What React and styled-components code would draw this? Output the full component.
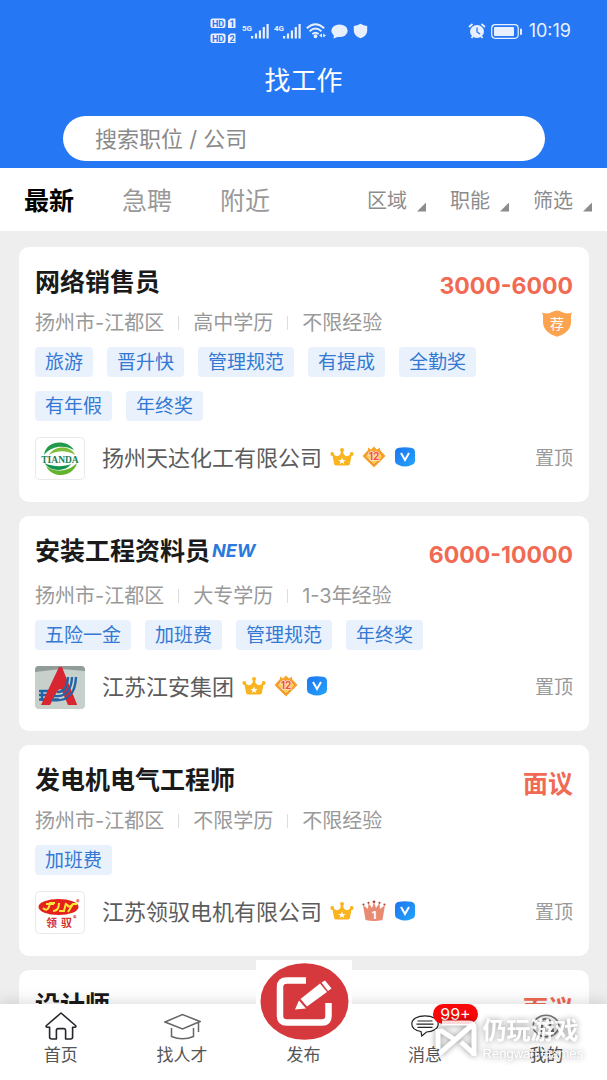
import React, { useState } from 'react';
import styled, { createGlobalStyle } from 'styled-components';

const jobs = [
	{
		id: 1,
		title: '网络销售员',
		pay: '3000-6000',
		meta: ['扬州市-江都区', '高中学历', '不限经验'],
		tags: ['旅游', '晋升快', '管理规范', '有提成', '全勤奖', '有年假', '年终奖'],
		company: '扬州天达化工有限公司',
		logo: 'tianda',
		medal: 'year',
		recommend: true,
	},
	{
		id: 2,
		title: '安装工程资料员',
		isNew: true,
		pay: '6000-10000',
		meta: ['扬州市-江都区', '大专学历', '1-3年经验'],
		tags: ['五险一金', '加班费', '管理规范', '年终奖'],
		company: '江苏江安集团',
		logo: 'jiangan',
		medal: 'year',
	},
	{
		id: 3,
		title: '发电机电气工程师',
		pay: '面议',
		meta: ['扬州市-江都区', '不限学历', '不限经验'],
		tags: ['加班费'],
		company: '江苏领驭电机有限公司',
		logo: 'lingyu',
		medal: 'first',
	},
	{
		id: 4,
		title: '设计师',
		pay: '面议',
		meta: [],
		tags: [],
	},
];

const tabs = ['最新', '急聘', '附近'];
const filters = ['区域', '职能', '筛选'];

export default function App() {
	const [tab, setTab] = useState('最新');
	const [keyword, setKeyword] = useState('');

	return (
		<>
			<GlobalStyle />
			<Page>
				<Header>
					<StatusBar />
					<HeaderTitle>找工作</HeaderTitle>
					<SearchWrap>
						<SearchInput
							type="search"
							aria-label="搜索职位 / 公司"
							placeholder="搜索职位 / 公司"
							value={keyword}
							onChange={(e) => setKeyword(e.target.value)}
						/>
					</SearchWrap>
				</Header>
				<Toolbar>
					<TabGroup>
						{tabs.map((name) => (
							<TabBtn key={name} $active={name === tab} onClick={() => setTab(name)}>
								{name}
							</TabBtn>
						))}
					</TabGroup>
					<FilterGroup>
						{filters.map((name) => (
							<FilterBtn key={name}>
								{name}
								<Corner />
							</FilterBtn>
						))}
					</FilterGroup>
				</Toolbar>
				<JobList>
					{jobs.map((job) => (
						<JobCard key={job.id} job={job} />
					))}
				</JobList>
				<TabBar />
			</Page>
		</>
	);
}

function JobCard({ job }) {
	return (
		<Card>
			<CardHead>
				<div>
					<TitleRow $tall={job.isNew}>
						<JobTitle>{job.title}</JobTitle>
						{job.isNew && <NewMark>NEW</NewMark>}
					</TitleRow>
					<MetaRow>
						{job.meta.map((text) => (
							<MetaItem key={text}>{text}</MetaItem>
						))}
					</MetaRow>
				</div>
				<HeadSide>
					<Pay $open={job.pay === '面议'}>{job.pay}</Pay>
					{job.recommend && <RecommendIcon />}
				</HeadSide>
			</CardHead>
			<TagList>
				{job.tags.map((tag) => (
					<Tag key={tag}>{tag}</Tag>
				))}
			</TagList>
			{job.company && (
				<CompanyRow>
					<CompanyLogo name={job.logo} />
					<CompanyName>{job.company}</CompanyName>
					<Medals>
						<CrownIcon />
						{job.medal === 'year' ? <YearIcon /> : <FirstIcon />}
						<VerifiedIcon />
					</Medals>
					<TopMark>置顶</TopMark>
				</CompanyRow>
			)}
		</Card>
	);
}

function TabBar() {
	return (
		<BottomNav>
			<NavItem href="#home">
				<NavIcon>
					<svg width="32" height="28" viewBox="0 0 32 28" fill="none" stroke="#25252d" strokeWidth="1.6" strokeLinejoin="round">
						<path d="M16 1 L30.5 13.5 Q31.5 15 29.8 15.2 H27.6 V25 Q27.6 27 25.6 27 H20.6 V18.3 Q20.6 16.6 19 16.6 H13.2 Q11.4 16.6 11.4 18.3 V27 H7 Q4.6 27 4.6 25 V15.2 H2.2 Q.5 15 1.5 13.5 Z" />
					</svg>
				</NavIcon>
				<NavLabel>首页</NavLabel>
			</NavItem>
			<NavItem href="#talent">
				<NavIcon>
					<svg width="37" height="27" viewBox="0 0 37 27" fill="none" stroke="#666" strokeWidth="1.5">
						<path d="M1 9 L18.5 1.5 L36 8.5 L18.5 16 Z" />
						<path d="M7.5 15 V23.5 Q18.5 28 29.5 23.5 V15" />
						<path d="M34.5 9 V19" />
					</svg>
				</NavIcon>
				<NavLabel>找人才</NavLabel>
			</NavItem>
			<NavItem href="#publish">
				<PublishIcon width="96" height="80" viewBox="0 0 96 80">
					<rect width="96" height="80" fill="#fff" />
					<ellipse cx="48.5" cy="41.5" rx="44" ry="38.3" fill="#d5393d" />
					<path d="M50 20.5 H31 Q24 20.5 24 27 V56 Q24 62.5 31 62.5 H66 Q72.5 62.5 72.5 56 V43" fill="none" stroke="#fff" strokeWidth="6.5" />
					<path d="M44.5 39 L64 23.5 L71 32 L51 46.5 Z" fill="#fff" />
					<path d="M39 49.5 L43 40.5 L50 48.5 Z" fill="#fff" />
					<path d="M65.5 22.5 L69 20.5 L75.5 28.5 L72 31 Z" fill="#fff" />
				</PublishIcon>
				<NavIcon />
				<NavLabel>发布</NavLabel>
			</NavItem>
			<NavItem href="#message">
				<NavIcon>
					<svg width="28" height="22" viewBox="0 0 28 22" fill="none" stroke="#222" strokeWidth="1.2">
						<path d="M10 16.5 C4 15.5 .8 12.800 .8 9 C.8 4.200 6.5 .8 14 .8 S27.200 4.200 27.200 9 S21.5 17 15.5 17 L10.800 21 Z" />
						<path d="M6.5 6 H21.5 M5.5 9.200 H22.5 M6.5 12.400 H21.5" />
					</svg>
				</NavIcon>
				<NavLabel>消息</NavLabel>
				<NavBadge>99+</NavBadge>
			</NavItem>
			<NavItem href="#me">
				<NavIcon>
					<svg width="28" height="24" viewBox="0 0 28 24" fill="none" stroke="#777" strokeWidth="1.6">
						<ellipse cx="14" cy="12" rx="12.8" ry="10.8" />
						<path d="M10.5 17 H7 Q7 13.5 10 12.5 Q8 4.8 14 4.8 T18 12.5 Q21 13.5 21 17 H17.5" strokeWidth="2" />
					</svg>
				</NavIcon>
				<NavLabel>我的</NavLabel>
			</NavItem>
			<Brand>
				<svg width="42" height="37" viewBox="0 0 42 37" fill="none" stroke="#fff" strokeWidth="5">
					<path d="M7 3 H34 Q39 3 39 8 V36 M3 9 V29 M5 10 L19 19 M37 5 L4 34 M26 22 L38 33" />
				</svg>
				<BrandText>
					<BrandName>仍玩游戏</BrandName>
					<BrandSub>Rengwan Games</BrandSub>
				</BrandText>
			</Brand>
		</BottomNav>
	);
}

function StatusBar() {
	return (
		<StatusRow>
			<StatusGroup>
				<svg width="27" height="26" viewBox="0 0 27 26" fill="#e8f0ff">
					<rect x=".5" y=".5" width="15" height="9.5" rx="2" />
					<path d="M18 2.5 L20.5 .5 H25.5 V10 H18 Z" />
					<rect x=".5" y="15.5" width="15" height="9.5" rx="2" />
					<path d="M18 17.5 L20.5 15.5 H25.5 V25 H18 Z" />
					<g fill="#2577f4" fontFamily="Roboto, sans-serif" fontWeight="700" fontSize="9">
						<text x="2" y="8.5">HD</text>
						<text x="19.5" y="8.5">1</text>
						<text x="2" y="23.5">HD</text>
						<text x="19.5" y="23.5">2</text>
					</g>
				</svg>
				<Signal label="5G" />
				<Signal label="4G" />
				<svg width="20" height="16" viewBox="0 0 20 16" fill="none" stroke="#e8f0ff" strokeWidth="1.9">
					<path d="M.8 5.2 Q9.5 -2.8 18.2 5.2 M3.6 8.2 Q9.5 3 15.4 8.2 M6.3 11 Q9.5 8.3 12.7 11" />
					<circle cx="9.5" cy="13.3" r="1" />
					<path d="M13 12.5 L16 10.5 V14.5 Z M20 12.5 L17.2 10.5 V14.5 Z" fill="#e8f0ff" stroke="none" />
				</svg>
				<svg width="17" height="15" viewBox="0 0 17 15" fill="#e8f0ff">
					<ellipse cx="8.5" cy="6.8" rx="8.2" ry="6.3" />
					<path d="M3 10 L2.5 14.5 L8 12.5 Z" />
				</svg>
				<svg width="15" height="16" viewBox="0 0 15 16" fill="#e8f0ff">
					<path d="M7.5 .8 Q10.5 2.8 14.2 3 V8 Q14 13 7.5 15.3 Q1 13 .8 8 V3 Q4.5 2.8 7.5 .8 Z" />
				</svg>
			</StatusGroup>
			<StatusGroup>
				<svg width="18" height="16" viewBox="0 0 18 16" fill="#e8f0ff">
					<ellipse cx="9" cy="8.5" rx="7" ry="6.5" />
					<path d="M1 4 L4.5 1 M17 4 L13.5 1 M3.5 15 L5 13 M14.5 15 L13 13" stroke="#e8f0ff" strokeWidth="1.8" />
					<path d="M9 4.5 V9 L12 11" fill="none" stroke="#2577f4" strokeWidth="1.3" />
				</svg>
				<svg width="32" height="15" viewBox="0 0 32 15" fill="#e8f0ff">
					<rect x=".7" y=".7" width="26.5" height="13.6" rx="3.5" fill="none" stroke="#e8f0ff" strokeWidth="1.2" />
					<rect x="3" y="3" width="20" height="9" rx="1" />
					<rect x="29" y="4.5" width="2" height="6.5" rx="1" />
				</svg>
				<Clock>10:19</Clock>
			</StatusGroup>
		</StatusRow>
	);
}

function Signal({ label }) {
	return (
		<svg width="27" height="16" viewBox="0 0 27 16" fill="#e8f0ff">
			<text x="0" y="7.5" fontFamily="Roboto, sans-serif" fontWeight="700" fontSize="8">{label}</text>
			<path d="M9 13 h2.2 v2.5 h-2.2 Z M12.9 10.5 h2.2 v5 h-2.2 Z M16.8 7.5 h2.2 v8 h-2.2 Z M20.7 4 h2.2 v11.5 h-2.2 Z M24.5 1 h2.2 v14.5 h-2.2 Z" />
		</svg>
	);
}

function CompanyLogo({ name }) {
	if (name === 'tianda') {
		return (
			<LogoSvg viewBox="0 0 50 43">
				<rect x=".5" y=".5" width="49" height="42" rx="4" fill="#fff" stroke="#e9e9e9" />
				<path d="M9 18 C11 3 32 2 39 13 C30 8 17 8 9 18 Z" fill="#219b4b" />
				<path d="M14 18 C19 8 36 8 40 18 C33 13 21 13 14 18 Z" fill="#7dbd38" />
				<path d="M42 26 C38 41 17 42 11 29 C20 36 33 35 42 26 Z" fill="#63b32e" />
				<path d="M36 27 C31 35 15 35 9.5 26 C17 30 29 30 36 27 Z" fill="#12924a" />
				<rect x="7" y="18" width="36" height="8" fill="#fff" />
				<text x="25" y="25.5" textAnchor="middle" fontFamily="Liberation Serif, serif" fontWeight="700" fontSize="9.5" fill="#1a7d58">TIANDA</text>
			</LogoSvg>
		);
	}
	if (name === 'jiangan') {
		return (
			<LogoSvg viewBox="0 0 50 43">
				<rect width="50" height="43" rx="4" fill="#c8d0cc" />
				<path d="M0 6 L26 3 L50 5 V4 Q50 0 46 0 H4 Q0 0 0 4 Z" fill="#8f9c98" />
				<path d="M4 25 H14 M4 29 H13 M4 33.5 H24 M7 24 V35" fill="none" stroke="#2164a8" strokeWidth="2.4" />
				<path d="M6 39 L24 1 H27 L42 39 H33 L26 23 L23 24 L15 39 Z" fill="#d9252f" />
				<path d="M17 34 Q40 37 41 11 M19 30 Q36 32 37 11 M22 26 Q32 27 33 11" fill="none" stroke="#2164a8" strokeWidth="2.4" />
				<path d="M33 31 L38 29 L42 39 H35 Z" fill="#d9252f" />
			</LogoSvg>
		);
	}
	return (
		<LogoSvg viewBox="0 0 50 43">
			<rect x=".5" y=".5" width="49" height="42" rx="4" fill="#fff" stroke="#e9e9e9" />
			<ellipse cx="23.5" cy="16" rx="20" ry="8" fill="#e3221c" />
			<path d="M8 17 Q13 22 15 12 H20 M11 13 H19 M18 20 Q24 20 24 12 M24 20 H29 L31 12 M32 13 Q33 18 38 13 H42 M38 13 L33 21" fill="none" stroke="#ffe535" strokeWidth="2" />
			<g fill="#d6312c" fontFamily="Noto Sans CJK SC, sans-serif" fontWeight="700">
				<text x="11" y="35.500" fontSize="11">领</text>
				<text x="26" y="35.500" fontSize="11">驭</text>
				<text x="41" y="14" fontSize="7">®</text>
				<text x="38" y="30" fontSize="7">®</text>
			</g>
		</LogoSvg>
	);
}

function RecommendIcon() {
	return (
		<svg width="32" height="27" viewBox="0 0 32 27">
			<path d="M1 2.5 Q7 4.5 11 2 Q16 -1 21 2 Q25 4.5 31 2.5 Q29.5 5 30 11 Q30.5 22 16 26.8 Q1.5 22 2 11 Q2.5 5 1 2.5 Z" fill="#fca350" />
			<text x="16" y="18.5" textAnchor="middle" fontFamily="Noto Sans CJK SC, sans-serif" fontSize="14" fill="#fff">荐</text>
		</svg>
	);
}

function CrownIcon() {
	return (
		<svg width="24" height="20" viewBox="0 0 24 20" fill="#f9b41f">
			<path d="M2 6 Q6 11 9 8.5 Q11 7 11 4 H13 Q13 7 15 8.5 Q18 11 22 6 L20 16.5 Q20 18.5 18 18.5 H6 Q4 18.5 4 16.5 Z" />
			<circle cx="12" cy="3" r="2" />
			<circle cx="2.3" cy="7" r="1.9" />
			<circle cx="21.7" cy="7" r="1.9" />
			<path d="M12 10.5 L13 13 L15.8 13 L13.5 14.5 L14.3 17 L12 15.5 L9.7 17 L10.5 14.5 L8.2 13 L11 13 Z" fill="#fff" />
		</svg>
	);
}

function YearIcon() {
	return (
		<svg width="24" height="22" viewBox="0 0 24 22">
			<path d="M6 1.5 L9 3.5 L12 .5 L15 3.5 L18 1.5 V4 L23.5 10 L12 21.5 L.5 10 L6 4 Z" fill="#f6a52a" />
			<path d="M7 5.5 H17 L21 10.5 L12 19 L3 10.5 Z" fill="#ffcf4b" stroke="#f0803d" />
			<text x="12" y="14" textAnchor="middle" fontFamily="Inter, sans-serif" fontWeight="700" fontSize="10" fill="#f0533a" stroke="#ffe3c4" strokeWidth="1.5" paintOrder="stroke">12</text>
		</svg>
	);
}

function FirstIcon() {
	return (
		<svg width="24" height="22" viewBox="0 0 24 22">
			<path d="M1 5 L6 9 L6.5 3 L10 8 L12 2 L14 8 L17.5 3 L18 9 L23 5 L20.5 20 Q12 22 3.5 20 Z" fill="#e98a72" />
			<g fill="#b9463c">
				<circle cx="1.5" cy="4.5" r="1.1" />
				<circle cx="6.5" cy="2.8" r="1.1" />
				<circle cx="12" cy="1.8" r="1.4" />
				<circle cx="17.5" cy="2.8" r="1.1" />
				<circle cx="22.5" cy="4.5" r="1.1" />
			</g>
			<text x="12" y="19" textAnchor="middle" fontFamily="Inter, sans-serif" fontWeight="700" fontSize="11" fill="#fff">1</text>
		</svg>
	);
}

function VerifiedIcon() {
	return (
		<svg width="22" height="20" viewBox="0 0 22 20">
			<defs>
				<linearGradient id="verified" x1="0" y1="0" x2="1" y2="1">
					<stop offset="0" stopColor="#1e74f0" />
					<stop offset="1" stopColor="#22a5fb" />
				</linearGradient>
			</defs>
			<path d="M5 .8 Q11 -.3 17 .8 Q21 1.5 21 5 V13.5 Q21 17 17.5 18 Q11 21 4.5 18 Q1 17 1 13.5 V5 Q1 1.5 5 .8 Z" fill="url(#verified)" />
			<path d="M7 6 L11 13 L15 6" fill="none" stroke="#fff" strokeWidth="2" />
		</svg>
	);
}

const GlobalStyle = createGlobalStyle`
	* {
		box-sizing: border-box;
	}
	body {
		margin: 0;
		background-color: #eee;
		font-family: Inter, "Noto Sans CJK SC", sans-serif;
	}
	button, input {
		font-family: inherit;
	}
	svg {
		display: block;
		flex: none;
	}
`;

const Page = styled.div`
	display: flex;
	flex-direction: column;
	height: 100vh;
	background-color: #eee;
`;

const Header = styled.header`
	flex: none;
	padding-bottom: 7px;
	background-color: #2577f4;
	color: #fff;
`;

const StatusRow = styled.div`
	display: flex;
	justify-content: space-between;
	align-items: center;
	height: 50px;
	padding: 12px 36px 0 210px;
`;

const StatusGroup = styled.div`
	display: flex;
	align-items: center;
	gap: 5px;
`;

const Clock = styled.time`
	margin-left: 1px;
	font-size: 18px;
	line-height: 20px;
	color: #e8f0ff;
`;

const HeaderTitle = styled.h1`
	margin: 0 0 6px;
	padding-top: 2px;
	font-size: 26px;
	font-weight: 400;
	line-height: 58px;
	text-align: center;
`;

const SearchWrap = styled.div`
	padding: 0 62px 0 63px;
`;

const SearchInput = styled.input`
	display: block;
	width: 100%;
	height: 45px;
	padding: 0 32px;
	border: none;
	border-radius: 23px;
	background-color: #fff;
	color: #333;
	font-size: 22px;
	outline: none;
	&::placeholder {
		color: #8a8a8a;
	}
`;

const Toolbar = styled.nav`
	display: flex;
	flex: none;
	justify-content: space-between;
	align-items: center;
	height: 63px;
	padding: 2px 15px 0 24px;
	background-color: #fff;
`;

const TabGroup = styled.div`
	display: flex;
	gap: 48px;
`;

const TabBtn = styled.button`
	padding: 0;
	border: none;
	background: none;
	color: ${({ $active }) => ($active ? '#000' : '#999')};
	font-size: 25px;
	font-weight: ${({ $active }) => ($active ? 700 : 400)};
	line-height: 36px;
	cursor: pointer;
`;

const FilterGroup = styled.div`
	display: flex;
	gap: 24px;
`;

const FilterBtn = styled.button`
	display: flex;
	align-items: flex-end;
	gap: 10px;
	padding: 0;
	border: none;
	background: none;
	color: #8c8c8c;
	font-size: 20px;
	line-height: 28px;
	cursor: pointer;
`;

const Corner = styled.span`
	width: 9px;
	height: 9px;
	margin-bottom: 3px;
	background-color: #8c8c8c;
	clip-path: polygon(100% 0, 100% 100%, 0 100%);
`;

const JobList = styled.main`
	display: flex;
	flex: 1;
	flex-direction: column;
	gap: 14px;
	min-height: 0;
	padding: 16px 18px 0 19px;
	overflow-y: auto;
	scrollbar-width: none;
`;

const Card = styled.article`
	flex: none;
	padding: 15px 16px 22px;
	border-radius: 10px;
	background-color: #fff;
`;

const CardHead = styled.div`
	display: flex;
	justify-content: space-between;
`;

const TitleRow = styled.div`
	display: flex;
	align-items: flex-start;
	height: ${({ $tall }) => ($tall ? 44 : 40)}px;
	line-height: 40px;
`;

const JobTitle = styled.h2`
	margin: 0;
	color: #1a1a1a;
	font-size: 25px;
	font-weight: 700;
	line-height: inherit;
`;

const NewMark = styled.em`
	margin-left: 2px;
	color: #2b79dd;
	font-size: 18px;
	font-weight: 700;
	font-style: italic;
`;

const MetaRow = styled.div`
	display: flex;
	align-items: center;
	height: 40px;
	padding-top: 2px;
`;

const MetaItem = styled.span`
	color: #999;
	font-size: 20px;
	line-height: 28px;
	& + &::before {
		content: '';
		display: inline-block;
		width: 1px;
		height: 14px;
		margin: 0 14px;
		background-color: #ddd;
	}
`;

const HeadSide = styled.div`
	display: flex;
	flex-direction: column;
	align-items: flex-end;
`;

const Pay = styled.strong`
	color: #f16a53;
	font-size: ${({ $open }) => ($open ? 25 : 23)}px;
	font-weight: 700;
	line-height: 48px;
`;

const TagList = styled.div`
	display: flex;
	flex-wrap: wrap;
	gap: 14px;
	margin-top: 5px;
	padding-right: 25px;
`;

const Tag = styled.span`
	padding: 2px 10px 0;
	border-radius: 4px;
	background-color: #e9f1fd;
	color: #3379d4;
	font-size: 19px;
	line-height: 28px;
`;

const CompanyRow = styled.div`
	display: flex;
	align-items: center;
	margin-top: 16px;
`;

const LogoSvg = styled.svg`
	width: 50px;
	height: 43px;
`;

const CompanyName = styled.span`
	margin-left: 17px;
	padding-bottom: 2px;
	color: #5c5c5c;
	font-size: 22px;
	line-height: 32px;
`;

const Medals = styled.div`
	display: flex;
	align-items: center;
	gap: 8px;
	margin-left: 8px;
	padding-bottom: 3px;
`;

const TopMark = styled.span`
	margin-left: auto;
	color: #999;
	font-size: 19px;
	line-height: 28px;
`;

const BottomNav = styled.nav`
	position: relative;
	display: flex;
	flex: none;
	padding: 7px 0 14px;
	background-color: #fff;
	box-shadow: 0 -2px 14px rgba(0, 0, 0, 0.14);
`;

const NavItem = styled.a`
	position: relative;
	display: flex;
	flex: 1;
	flex-direction: column;
	align-items: center;
	gap: 3px;
	color: #555;
	text-decoration: none;
`;

const NavIcon = styled.span`
	display: flex;
	align-items: center;
	height: 30px;
`;

const NavLabel = styled.span`
	font-size: 17px;
	line-height: 22px;
`;

const PublishIcon = styled.svg`
	position: absolute;
	bottom: 26px;
`;

const NavBadge = styled.span`
	position: absolute;
	top: -7px;
	left: 69px;
	padding: 0 7px;
	border-radius: 10px;
	background-color: #f80808;
	color: #fff;
	font-size: 16px;
	line-height: 20px;
`;

const Brand = styled.div`
	position: absolute;
	right: 24px;
	bottom: 19px;
	display: flex;
	align-items: center;
	gap: 6px;
	color: #fff;
	opacity: 0.85;
	filter: drop-shadow(0 0 3px rgba(0, 0, 0, 0.5));
	pointer-events: none;
`;

const BrandText = styled.div`
	display: flex;
	flex-direction: column;
`;

const BrandName = styled.span`
	font-size: 24px;
	font-weight: 700;
	line-height: 30px;
`;

const BrandSub = styled.span`
	font-family: "Liberation Sans", sans-serif;
	font-size: 13px;
	line-height: 15px;
`;
